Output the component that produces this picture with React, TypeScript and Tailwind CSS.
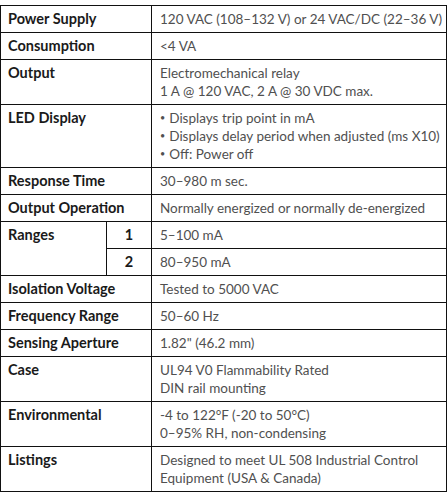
const rows: { label: string; value: string[]; bullets?: boolean }[] = [
  { label: 'Power Supply', value: ['120 VAC (108–132 V) or 24 VAC/DC (22–36 V)'] },
  { label: 'Consumption', value: ['<4 VA'] },
  { label: 'Output', value: ['Electromechanical relay', '1 A @ 120 VAC, 2 A @ 30 VDC max.'] },
  {
    label: 'LED Display',
    value: ['Displays trip point in mA', 'Displays delay period when adjusted (ms X10)', 'Off: Power off'],
    bullets: true,
  },
  { label: 'Response Time', value: ['30–980 m sec.'] },
  { label: 'Output Operation', value: ['Normally energized or normally de-energized'] },
]

const rowsAfter: { label: string; value: string[] }[] = [
  { label: 'Isolation Voltage', value: ['Tested to 5000 VAC'] },
  { label: 'Frequency Range', value: ['50–60 Hz'] },
  { label: 'Sensing Aperture', value: ['1.82" (46.2 mm)'] },
  { label: 'Case', value: ['UL94 V0 Flammability Rated', 'DIN rail mounting'] },
  { label: 'Environmental', value: ['-4 to 122°F (-20 to 50°C)', '0–95% RH, non-condensing'] },
  { label: 'Listings', value: ['Designed to meet UL 508 Industrial Control', 'Equipment (USA & Canada)'] },
]

const labelCls =
  'border border-[#111] px-[7px] pt-[4px] pb-[4px] align-top text-left text-[14.5px] font-bold leading-[18px] text-[#1a1a1a] whitespace-nowrap'
const valueCls =
  'border border-[#111] pl-[8px] pr-0 pt-[4px] pb-[4px] align-top text-left text-[13.5px] leading-[18px] text-[#505050] whitespace-nowrap'

function Value({ lines, bullets }: { lines: string[]; bullets?: boolean }) {
  return (
    <td className={valueCls}>
      {lines.map((l) => (
        <div key={l}>
          {bullets && <span className="mr-[4px] text-[9px] align-[2px]">•</span>}
          {l}
        </div>
      ))}
    </td>
  )
}

export default function App() {
  return (
    <div className="h-[497px] w-[447px] overflow-hidden bg-white pt-[5px]" style={{ fontFamily: 'Lato, sans-serif' }}>
      <table className="w-[447px] table-fixed border-collapse">
        <colgroup>
          <col className="w-[106px]" />
          <col className="w-[45px]" />
          <col />
        </colgroup>
        <tbody>
          {rows.map((r) => (
            <tr key={r.label}>
              <td colSpan={2} className={labelCls}>
                {r.label}
              </td>
              <Value lines={r.value} bullets={r.bullets} />
            </tr>
          ))}
          <tr>
            <td rowSpan={2} className={labelCls}>
              Ranges
            </td>
            <td className={labelCls + ' !text-center'}>1</td>
            <Value lines={['5–100 mA']} />
          </tr>
          <tr>
            <td className={labelCls + ' !text-center'}>2</td>
            <Value lines={['80–950 mA']} />
          </tr>
          {rowsAfter.map((r) => (
            <tr key={r.label}>
              <td colSpan={2} className={labelCls}>
                {r.label}
              </td>
              <Value lines={r.value} />
            </tr>
          ))}
        </tbody>
      </table>
    </div>
  )
}
